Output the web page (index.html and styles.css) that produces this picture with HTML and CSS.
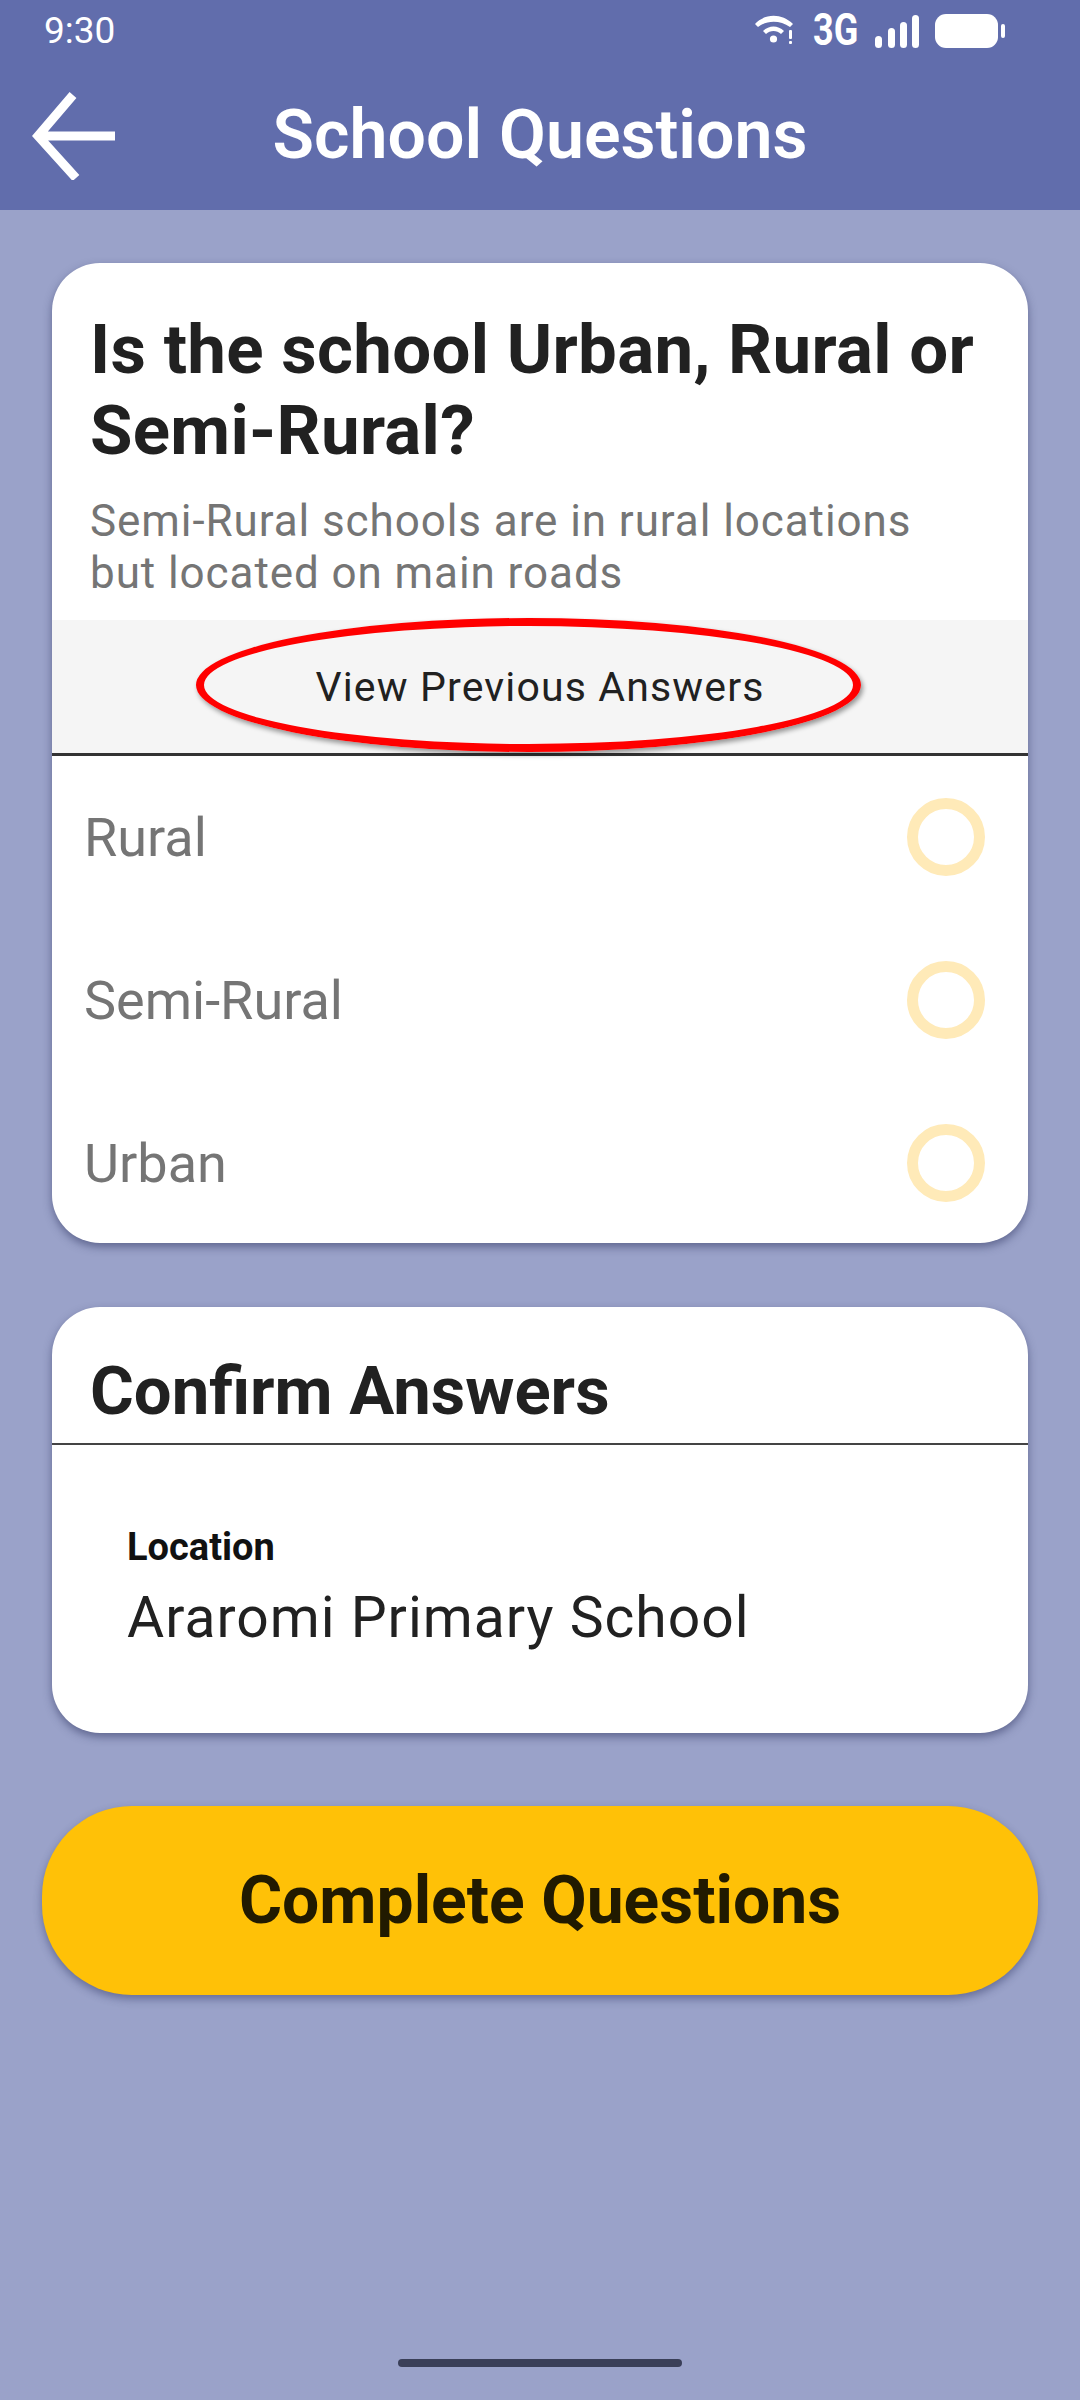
FILE: index.html
```html
<!DOCTYPE html>
<html lang="en">
<head>
    <meta charset="UTF-8">
    <meta name="viewport" content="width=device-width, initial-scale=1.0">
    <title>School Questions</title>
    <link rel="stylesheet" href="styles.css">
</head>
<body>
<div class="app">
    <div class="app-top">
        <div class="status">
            <span class="status__time">9:30</span>
            <div class="status__icons">
                <svg class="status__wifi" width="40" height="30" viewBox="0 0 40 30">
                    <path d="M0 9 C10 -2 27 -2 38 9 L35 12 C25 5 12 5 3 12 Z" fill="#fff"/>
                    <path d="M8 16 C14 10 23 10 29 16 L26 19 C22 15 15 15 11 19 Z" fill="#fff"/>
                    <circle cx="18.5" cy="24" r="3.6" fill="#fff"/>
                    <rect x="34" y="15" width="3" height="9" rx="1" fill="#fff"/>
                    <rect x="34" y="26" width="3" height="3" rx="1" fill="#fff"/>
                </svg>
                <span class="status__net">3G</span>
                <svg class="status__signal" width="45" height="33" viewBox="0 0 45 33">
                    <rect x="0" y="21" width="7" height="12" rx="3.5" fill="#fff"/>
                    <rect x="13" y="13" width="7" height="20" rx="3.5" fill="#fff"/>
                    <rect x="25" y="7" width="7" height="26" rx="3.5" fill="#fff"/>
                    <rect x="37" y="0" width="7" height="33" rx="3.5" fill="#fff"/>
                </svg>
                <svg class="status__battery" width="72" height="36" viewBox="0 0 72 36">
                    <rect x="1" y="1" width="63" height="34" rx="11" fill="#fff"/>
                    <rect x="67" y="11" width="4" height="14" rx="2" fill="#fff"/>
                </svg>
            </div>
        </div>
        <div class="bar">
            <svg class="bar__back" width="90" height="90" viewBox="0 0 90 90">
                <path d="M89 46 H12 M47 5 L12 46 L50 88" fill="none" stroke="#fff" stroke-width="9"/>
            </svg>
            <div class="bar__title">School Questions</div>
        </div>
    </div>

    <div class="app-body">
        <div class="card card--question">
            <div class="card__head">
                <div class="card__title">Is the school Urban, Rural or Semi-Rural?</div>
                <div class="card__hint">Semi-Rural schools are in rural locations but located on main roads</div>
            </div>
            <div class="prev">
                <span>View Previous Answers</span>
                <div class="prev__mark"></div>
            </div>
            <div class="option"><span>Rural</span><i class="option__ring"></i></div>
            <div class="option"><span>Semi-Rural</span><i class="option__ring"></i></div>
            <div class="option"><span>Urban</span><i class="option__ring"></i></div>
        </div>

        <div class="card card--confirm">
            <div class="card__title card__title--line">Confirm Answers</div>
            <div class="answer">
                <div class="answer__label">Location</div>
                <div class="answer__value">Araromi Primary School</div>
            </div>
        </div>

        <div class="submit">Complete Questions</div>
    </div>

    <div class="home"></div>
</div>
</body>
</html>
```

FILE: styles.css
```css
html,
body {
    margin: 0;
    padding: 0;
}

body {
    width: 1080px;
    height: 2400px;
    overflow: hidden;
    font-family: "Roboto", sans-serif;
    color: #212121;
    background: #9aa2c9;
}

.app {
    display: flex;
    flex-direction: column;
    height: 100%;
}

.app-top {
    height: 210px;
    background: #616dac;
    color: #fff;
}

.status {
    display: flex;
    align-items: center;
    justify-content: space-between;
    height: 60px;
    padding: 0 74px 0 44px;
}

.status__time {
    font-size: 37px;
}

.status__icons {
    display: flex;
    align-items: center;
}

.status__wifi {
    margin-right: 18px;
}

.status__net {
    display: inline-block;
    width: 45px;
    margin-right: 17px;
    font-size: 44px;
    font-weight: 700;
    line-height: 40px;
    white-space: nowrap;
    transform: scaleX(0.82);
    transform-origin: left center;
}

.status__signal {
    margin: 2px 14px 0 0;
}

.status__battery {
    margin-top: 2px;
}

.bar {
    position: relative;
    display: flex;
    align-items: center;
    justify-content: center;
    height: 150px;
}

.bar__back {
    position: absolute;
    left: 26px;
    top: 30px;
}

.bar__title {
    font-size: 68px;
    font-weight: 600;
    letter-spacing: 0;
}

.app-body {
    display: flex;
    flex-direction: column;
    align-items: center;
    padding-top: 53px;
}

.card {
    width: 976px;
    background: #fff;
    border-radius: 48px;
    box-shadow: 0 4px 8px rgba(40, 46, 90, 0.5);
}

.card--question {
    height: 980px;
    overflow: hidden;
    margin-bottom: 64px;
}

.card--confirm {
    height: 426px;
    margin-bottom: 73px;
}

.card__head {
    height: 357px;
    padding: 46px 30px 0 38px;
    box-sizing: border-box;
}

.card__title {
    font-size: 69px;
    font-weight: 700;
    line-height: 81px;
    letter-spacing: 0.3px;
}

.card__title--line {
    height: 138px;
    padding: 44px 0 0 38px;
    box-sizing: border-box;
    border-bottom: 2px solid #444;
    font-size: 67px;
    letter-spacing: 0;
}

.card__hint {
    max-width: 880px;
    margin-top: 24px;
    font-size: 44px;
    line-height: 52px;
    letter-spacing: 0.92px;
    color: #757575;
}

.prev {
    position: relative;
    display: flex;
    align-items: center;
    justify-content: center;
    height: 133px;
    background: #f5f5f5;
    border-bottom: 3px solid #333;
    font-size: 41px;
    letter-spacing: 1.15px;
}

.prev__mark {
    position: absolute;
    left: 144px;
    top: -2px;
    width: 665px;
    height: 134px;
    box-sizing: border-box;
    border: 8px solid #f00;
    border-radius: 50%;
    box-shadow: 2px 3px 5px rgba(0, 0, 0, 0.4);
}

.option {
    display: flex;
    align-items: center;
    justify-content: space-between;
    height: 163px;
    padding: 0 43px 0 32px;
    font-size: 54px;
    color: #757575;
}

.option__ring {
    width: 78px;
    height: 78px;
    margin-top: -2px;
    box-sizing: border-box;
    border: 11px solid #ffeab8;
    border-radius: 50%;
}

.answer {
    padding: 80px 0 0 75px;
}

.answer__label {
    font-size: 38px;
    font-weight: 700;
    line-height: 44px;
    color: #111;
}

.answer__value {
    margin-top: 14px;
    font-size: 57px;
    line-height: 70px;
    letter-spacing: 1px;
}

.submit {
    display: flex;
    align-items: center;
    justify-content: center;
    width: 996px;
    height: 189px;
    border-radius: 90px;
    background: #ffc107;
    color: #211a00;
    font-size: 66px;
    font-weight: 700;
    box-shadow: 0 4px 8px rgba(40, 46, 90, 0.45);
}

.home {
    width: 284px;
    height: 8px;
    margin: 364px auto 0;
    border-radius: 4px;
    background: #3a3f58;
}
```
